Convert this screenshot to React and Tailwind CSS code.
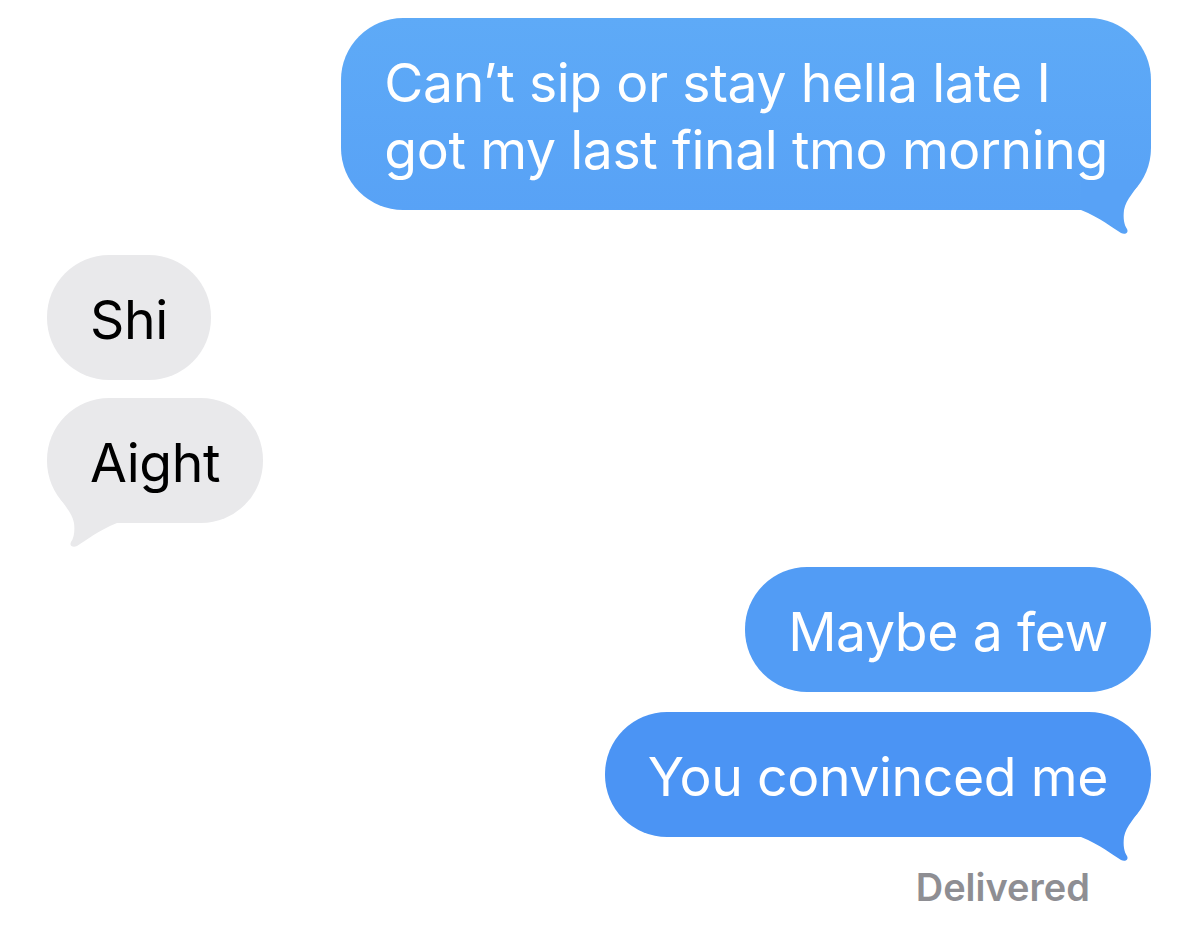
import React from "react";

const font = { fontFamily: "Inter, 'Noto Sans', sans-serif" };

function Tail({ color, left }) {
  return (
    <svg
      width="70"
      height="56"
      viewBox="0 0 70 56"
      className={
        left
          ? "absolute left-0 bottom-[-26px] -scale-x-100"
          : "absolute right-0 bottom-[-26px]"
      }
    >
      <path
        d="M0 0 L60 0 C55 10 45 19 43 30 C42 38 43 45 46 49 C48 53 44 55 40 53 C30 47 20 38 0 30 Z"
        fill={color}
      />
    </svg>
  );
}

function Sent({ children, bg, tail, tailColor }) {
  return (
    <div className={`relative self-end rounded-[62px] px-[43px] pt-[31px] pb-[27px] ${bg}`}>
      <p className="relative z-10 whitespace-nowrap text-white text-[53.5px] leading-[67px] tracking-[-0.4px]" style={font}>
        {children}
      </p>
      {tail && <Tail color={tailColor} />}
    </div>
  );
}

function Received({ children, tail }) {
  return (
    <div className="relative self-start rounded-[62px] bg-[#e9e9eb] px-[43px] pt-[31px] pb-[27px]">
      <p className="relative z-10 whitespace-nowrap text-black text-[53.5px] leading-[67px] tracking-[-0.4px]" style={font}>
        {children}
      </p>
      {tail && <Tail color="#e9e9eb" left />}
    </div>
  );
}

export default function App() {
  return (
    <div className="min-h-[929px] w-[1200px] bg-white pt-[18px] pl-[47px] pr-[49px] flex flex-col">
      <Sent bg="bg-gradient-to-b from-[#5eaaf7] to-[#58a2f6]" tail tailColor="#58a2f6">
        Can’t sip or stay hella late I
        <br />
        got my last final tmo morning
      </Sent>
      <div className="mt-[45px] flex flex-col gap-[18px]">
        <Received>Shi</Received>
        <Received tail>Aight</Received>
      </div>
      <div className="mt-[44px] flex flex-col gap-[20px]">
        <Sent bg="bg-[#529cf5]">Maybe a few</Sent>
        <Sent bg="bg-[#4b94f4]" tail tailColor="#4b94f4">
          You convinced me
        </Sent>
      </div>
      <p
        className="self-end mr-[61px] mt-[28px] text-[38px] leading-[44px] font-semibold text-[#8e8e93]"
        style={font}
      >
        Delivered
      </p>
    </div>
  );
}
